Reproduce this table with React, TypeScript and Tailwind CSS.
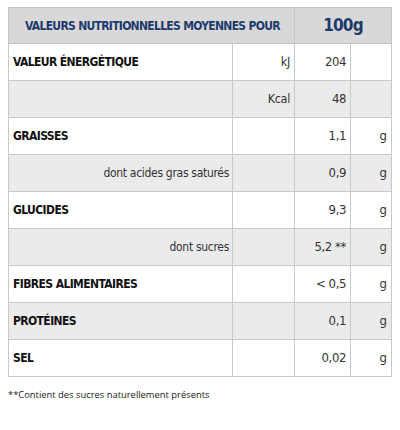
import React from "react";

type Row = { label: string; sub?: boolean; unit?: string; value: string; g?: boolean; gray?: boolean };

const rows: Row[] = [
  { label: "VALEUR ÉNERGÉTIQUE", unit: "kJ", value: "204" },
  { label: "", unit: "Kcal", value: "48", gray: true },
  { label: "GRAISSES", value: "1,1", g: true },
  { label: "dont acides gras saturés", sub: true, value: "0,9", g: true, gray: true },
  { label: "GLUCIDES", value: "9,3", g: true },
  { label: "dont sucres", sub: true, value: "5,2 **", g: true, gray: true },
  { label: "FIBRES ALIMENTAIRES", value: "< 0,5", g: true },
  { label: "PROTÉINES", value: "0,1", g: true, gray: true },
  { label: "SEL", value: "0,02", g: true },
];

const cond = { fontFamily: '"DejaVu Sans Condensed", Roboto, sans-serif' };

export default function App() {
  return (
    <div className="w-[400px] h-[430px] bg-white pt-[7px] px-[8px]" style={cond}>
      <table className="w-[383px] border-collapse table-fixed">
        <colgroup>
          <col className="w-[224px]" />
          <col className="w-[62px]" />
          <col className="w-[56px]" />
          <col className="w-[41px]" />
        </colgroup>
        <thead>
          <tr className="h-[36px] bg-[#d8d8d8]">
            <th colSpan={2} className="border border-[#c4c4c4] text-left pl-[16px] text-[12px] font-bold text-[#1d3a6c] tracking-[-0.7px]">
              VALEURS NUTRITIONNELLES MOYENNES POUR
            </th>
            <th colSpan={2} className="border border-[#c4c4c4] text-center text-[17px] font-bold text-[#1d3a6c] tracking-[-0.8px]">
              100g
            </th>
          </tr>
        </thead>
        <tbody>
          {rows.map((r, i) => (
            <tr key={i} className={`h-[37px] ${r.gray ? "bg-[#ebebeb]" : "bg-white"}`}>
              <td
                className={`border border-[#c8c8c8] ${
                  r.sub
                    ? "text-right pr-[3px] text-[12px] tracking-[-0.3px] text-[#333]"
                    : "text-left pl-[4px] text-[12px] font-bold tracking-[-0.6px] text-[#111]"
                }`}
              >
                {r.label}
              </td>
              <td className="border border-[#c8c8c8] text-right pr-[4px] text-[12.5px] tracking-[-0.3px] text-[#333]">{r.unit ?? ""}</td>
              <td className="border border-[#c8c8c8] text-right pr-[4px] text-[13px] tracking-[-0.4px] text-[#333]">{r.value}</td>
              <td className="border border-[#c8c8c8] text-right pr-[4px] text-[13px] text-[#333]">{r.g ? "g" : ""}</td>
            </tr>
          ))}
        </tbody>
      </table>
      <p className="mt-[11px] text-[9.4px] text-[#222]" style={{ fontFamily: '"Open Sans", sans-serif' }}>
        **Contient des sucres naturellement présents
      </p>
    </div>
  );
}
